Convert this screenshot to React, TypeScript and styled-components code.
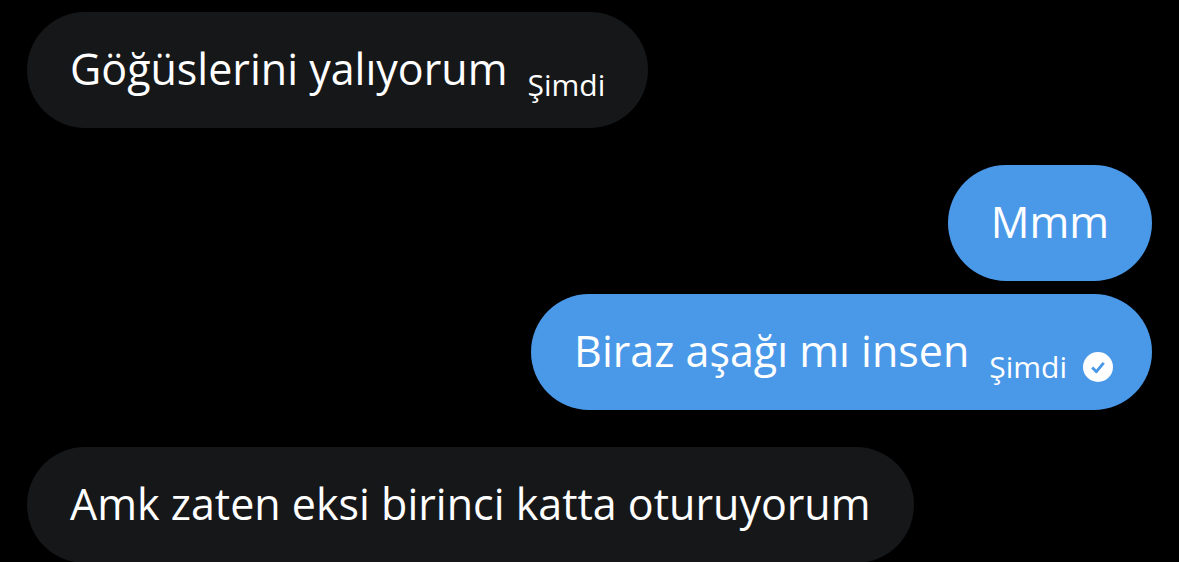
import React from "react";
import styled, { createGlobalStyle } from "styled-components";

const GlobalStyle = createGlobalStyle`
  body {
    margin: 0;
    background: #000;
    font-family: "Open Sans", "Noto Sans", sans-serif;
  }
`;

const Conversation = styled.main`
  display: flex;
  flex-direction: column;
  gap: 37px;
  padding: 12px 27px 0;
`;

const MessageGroup = styled.section<{ $sent?: boolean }>`
  display: flex;
  flex-direction: column;
  align-items: ${({ $sent }) => ($sent ? "flex-end" : "flex-start")};
  gap: 13px;
`;

const Bubble = styled.article<{ $sent?: boolean; $receipt?: boolean }>`
  display: flex;
  align-items: flex-end;
  gap: 20px;
  padding: 29px ${({ $receipt }) => ($receipt ? 39 : 43)}px 25px 43px;
  border-radius: 58px;
  background: ${({ $sent }) => ($sent ? "#4a99e9" : "#161719")};
  color: #fff;
`;

const Text = styled.p`
  margin: 0 0 6px;
  font-size: 43px;
  line-height: 56px;
`;

const Meta = styled.footer`
  display: flex;
  align-items: center;
  gap: 16px;
  font-size: 30px;
  line-height: 36px;
`;

const Receipt = styled.svg`
  display: block;
  width: 30px;
  height: 30px;
`;

const SentReceipt = () => (
  <Receipt viewBox="0 0 30 30" role="img" aria-label="Gönderildi">
    <circle cx="15" cy="15" r="15" fill="#fff" />
    <path
      d="M9.2 15.4l4.2 4.3 7.3-8.9"
      fill="none"
      stroke="#4a99e9"
      strokeWidth="2.9"
      strokeLinejoin="round"
    />
  </Receipt>
);

export default function App() {
  return (
    <>
      <GlobalStyle />
      <Conversation lang="tr">
        <MessageGroup>
          <Bubble>
            <Text>Göğüslerini yalıyorum</Text>
            <Meta>
              <time>Şimdi</time>
            </Meta>
          </Bubble>
        </MessageGroup>
        <MessageGroup $sent>
          <Bubble $sent>
            <Text>Mmm</Text>
          </Bubble>
          <Bubble $sent $receipt>
            <Text>Biraz aşağı mı insen</Text>
            <Meta>
              <time>Şimdi</time>
              <SentReceipt />
            </Meta>
          </Bubble>
        </MessageGroup>
        <MessageGroup>
          <Bubble>
            <Text>Amk zaten eksi birinci katta oturuyorum</Text>
          </Bubble>
        </MessageGroup>
      </Conversation>
    </>
  );
}
